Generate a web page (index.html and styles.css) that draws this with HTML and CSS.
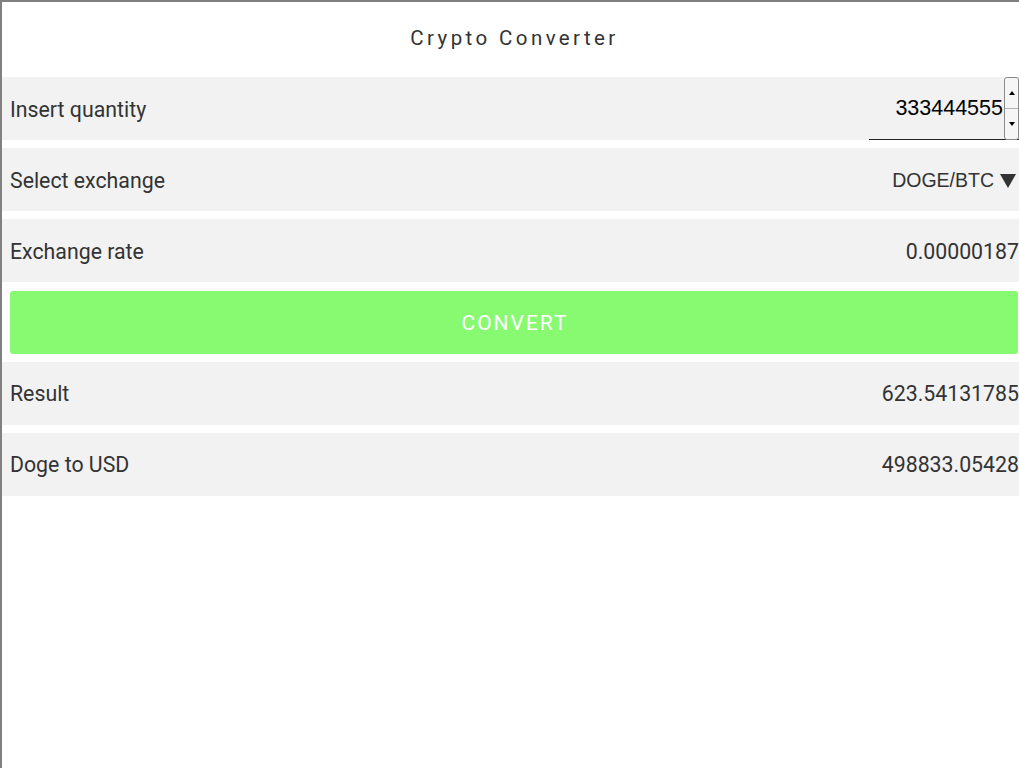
FILE: index.html
```html
<!DOCTYPE html>
<html>
<head>
<meta charset="utf-8">
<link rel="stylesheet" href="styles.css">
</head>
<body>
<div class="app">
  <header class="title">Crypto Converter</header>
  <div class="row">
    <span class="label">Insert quantity</span>
    <div class="qty">
      <span class="qty-value">333444555</span>
      <div class="spinner">
        <div class="spin-btn"><span class="tri-up"></span></div>
        <div class="spin-btn"><span class="tri-down"></span></div>
      </div>
    </div>
  </div>
  <div class="row">
    <span class="label">Select exchange</span>
    <span class="select">DOGE/BTC <span class="caret"></span></span>
  </div>
  <div class="row">
    <span class="label">Exchange rate</span>
    <span class="value">0.00000187</span>
  </div>
  <div class="btn-wrap">
    <div class="convert">CONVERT</div>
  </div>
  <div class="row">
    <span class="label">Result</span>
    <span class="value">623.54131785</span>
  </div>
  <div class="row">
    <span class="label">Doge to USD</span>
    <span class="value">498833.05428</span>
  </div>
</div>
</body>
</html>
```

FILE: styles.css
```css
html, body {
  margin: 0;
  padding: 0;
  background: #fff;
}
.app {
  box-sizing: border-box;
  width: 1019px;
  height: 768px;
  border-left: 2px solid #808080;
  border-top: 2px solid #808080;
  font-family: Roboto, "Liberation Sans", sans-serif;
  color: #333;
  display: flex;
  flex-direction: column;
}
.title {
  height: 75px;
  display: flex;
  align-items: center;
  justify-content: center;
  font-size: 20.5px;
  letter-spacing: 3.4px;
  font-weight: 400;
  color: #333;
  padding-left: 8px;
  box-sizing: border-box;
  padding-bottom: 3px;
}
.row {
  box-sizing: border-box;
  height: 63px;
  margin-bottom: 8.2px;
  background: #f2f2f2;
  display: flex;
  align-items: center;
  justify-content: space-between;
  padding-left: 8px;
  padding-top: 1px;
  font-size: 21.3px;
}
.label {
  color: #333;
}
.value {
  color: #333;
  padding-right: 0;
}
.qty {
  align-self: stretch;
  display: flex;
  align-items: stretch;
  width: 150px;
  border-bottom: 1px solid #222;
  box-sizing: border-box;
  margin-top: -1px;
}
.qty-value {
  flex: 1;
  display: flex;
  align-items: center;
  justify-content: flex-end;
  font-family: "Liberation Sans", Arial, sans-serif;
  color: #000;
  font-size: 21.5px;
  padding-right: 1px;
  padding-top: 1px;
}
.spinner {
  width: 15px;
  display: flex;
  flex-direction: column;
  border: 1px solid #8a8a8a;
  border-radius: 3px;
  box-sizing: border-box;
  background: #f6f6f6;
  margin-bottom: -1px;
}
.spin-btn {
  flex: 1;
  display: flex;
  align-items: center;
  justify-content: center;
}
.spin-btn + .spin-btn {
  border-top: 1px solid #b0b0b0;
}
.tri-up {
  width: 0;
  height: 0;
  border-left: 3px solid transparent;
  border-right: 3px solid transparent;
  border-bottom: 4px solid #000;
}
.tri-down {
  width: 0;
  height: 0;
  border-left: 3px solid transparent;
  border-right: 3px solid transparent;
  border-top: 4px solid #000;
}
.select {
  font-family: "Liberation Sans", Arial, sans-serif;
  color: #333;
  font-size: 19.5px;
  padding-right: 3px;
  display: flex;
  align-items: center;
  gap: 6px;
}
.caret {
  width: 0;
  height: 0;
  border-left: 8px solid transparent;
  border-right: 8px solid transparent;
  border-top: 14px solid #333;
  margin-top: 1px;
}
.btn-wrap {
  height: 63px;
  margin-bottom: 8.2px;
  padding-left: 8px;
  display: flex;
}
.convert {
  flex: 1;
  background: #88fa72;
  border-radius: 3px;
  color: #fff;
  font-size: 21px;
  letter-spacing: 2px;
  display: flex;
  align-items: center;
  justify-content: center;
  margin-right: 1px;
  padding-left: 2px;
  padding-top: 1px;
}
```
